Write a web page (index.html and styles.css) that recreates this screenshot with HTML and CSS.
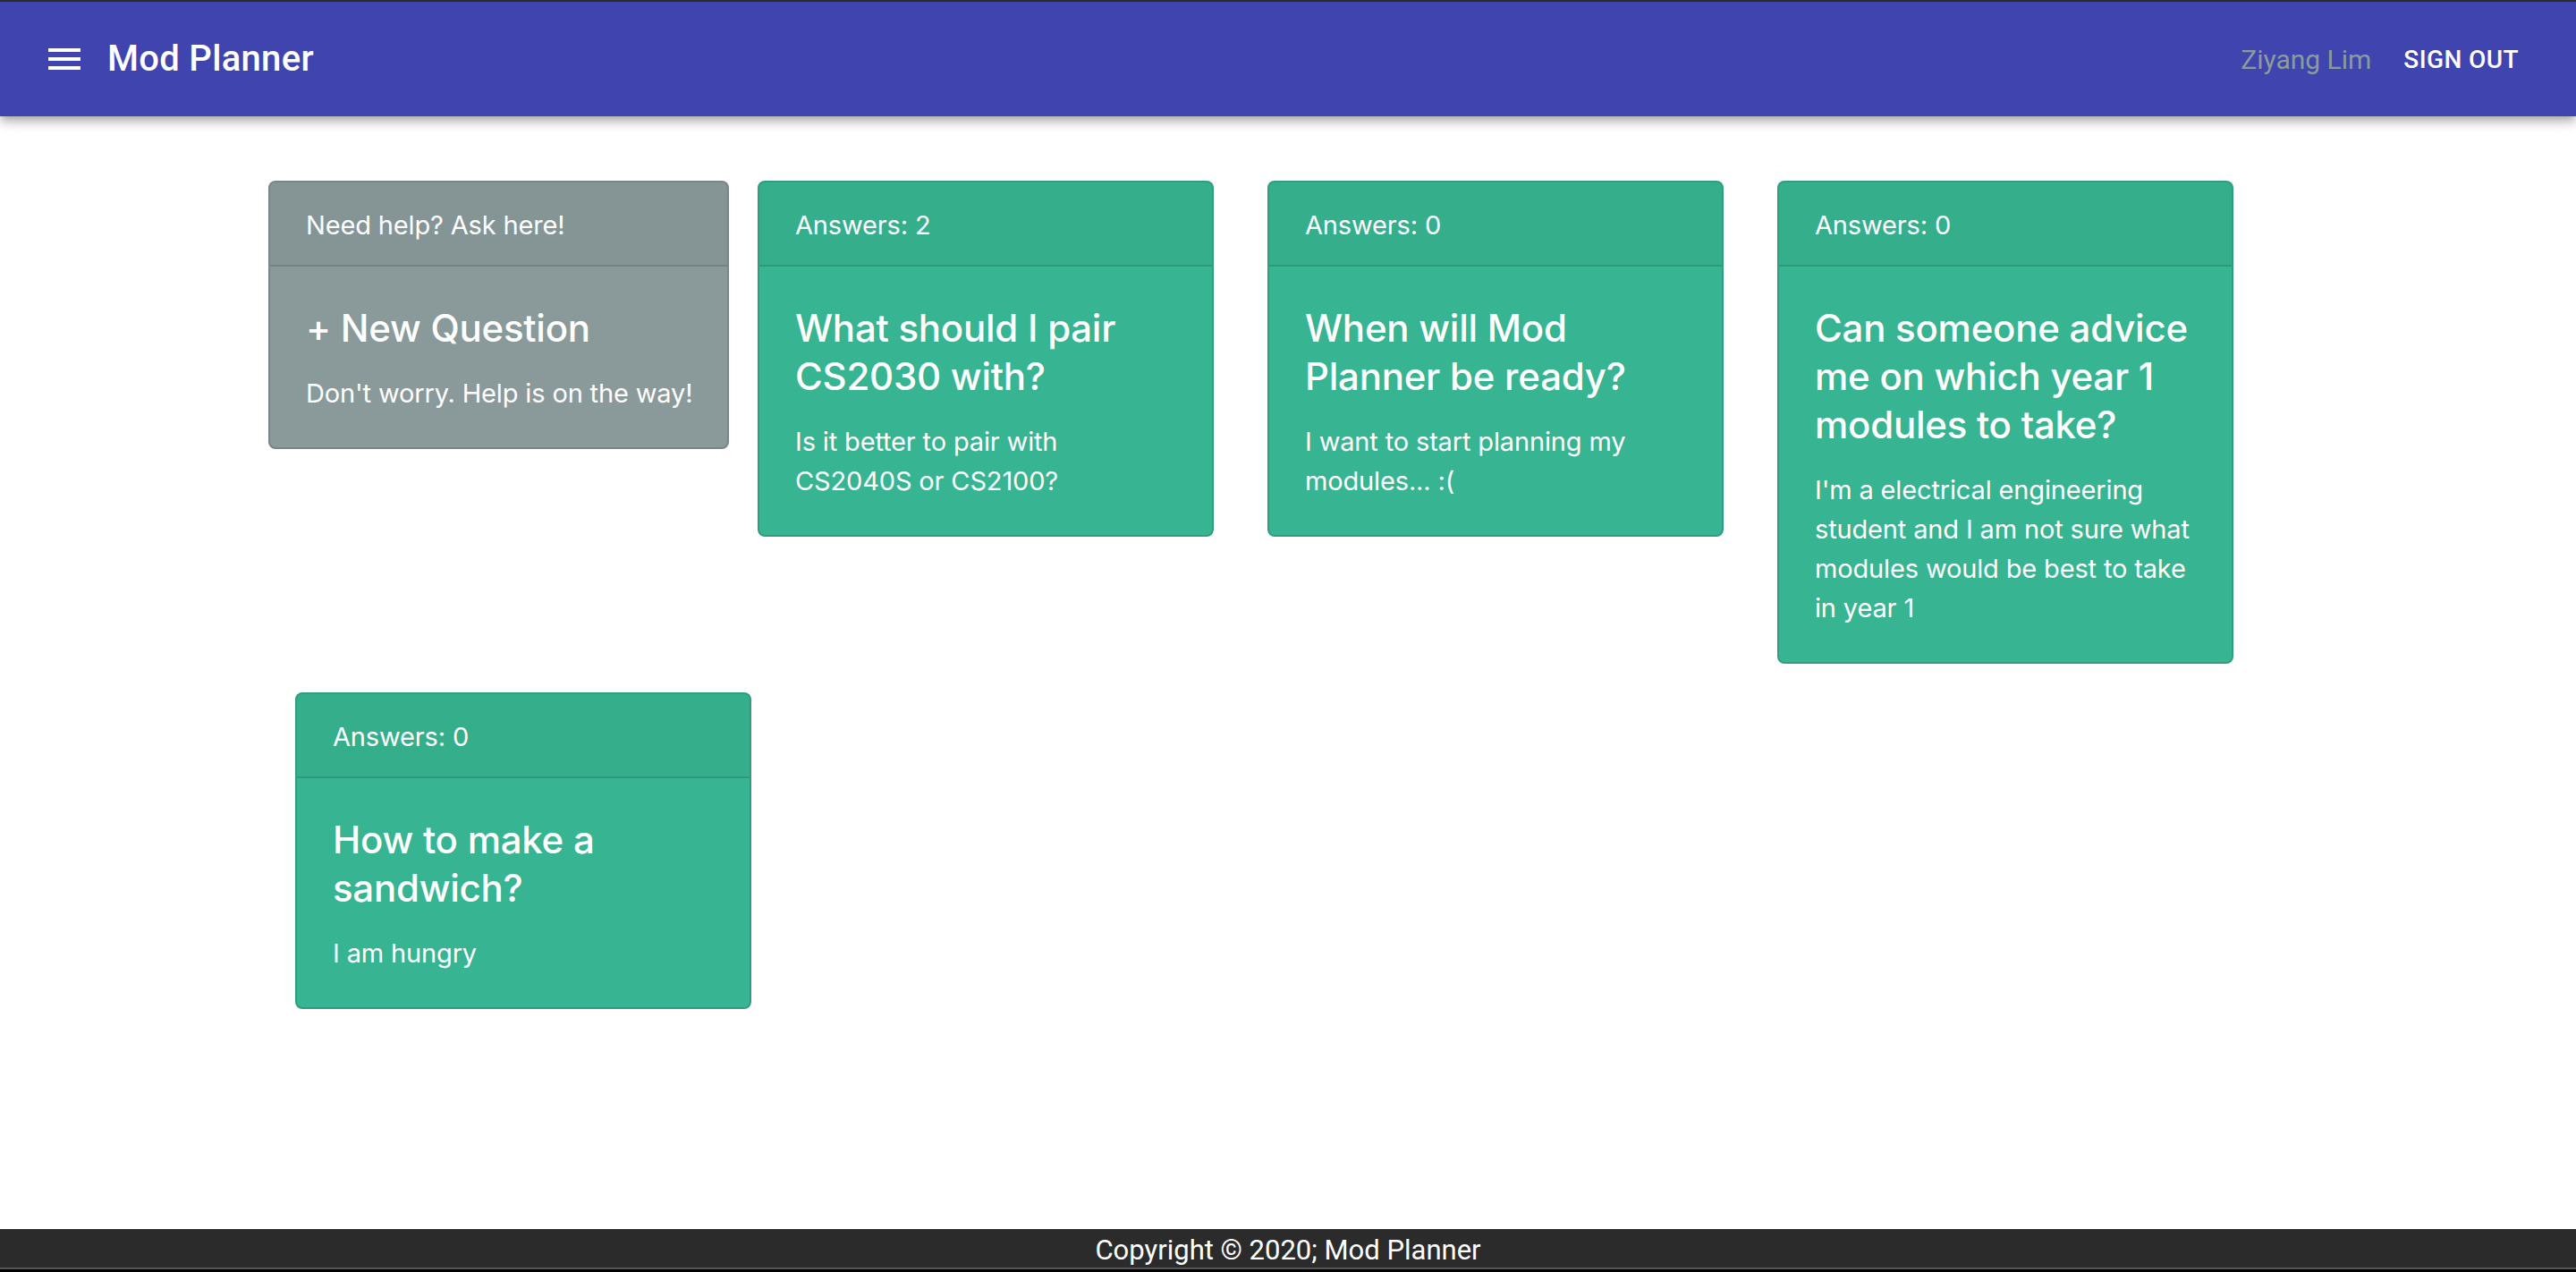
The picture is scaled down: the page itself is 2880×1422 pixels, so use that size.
FILE: index.html
```html
<!DOCTYPE html>
<html lang="en">
<head>
<meta charset="utf-8">
<title>Mod Planner</title>
<link rel="stylesheet" href="styles.css">
</head>
<body>
<header class="appbar">
  <button class="menu-btn" aria-label="menu">
    <svg viewBox="0 0 24 24" width="48" height="48"><path fill="#fff" d="M3 18h18v-2H3v2zm0-5h18v-2H3v2zm0-7v2h18V6H3z"/></svg>
  </button>
  <div class="brand">Mod Planner</div>
  <div class="user">Ziyang Lim</div>
  <button class="signout">Sign out</button>
</header>

<main class="board">
  <div class="card card-grey card-new">
    <div class="card-header">Need help? Ask here!</div>
    <div class="card-body">
      <h4 class="card-title">+ New Question</h4>
      <p class="card-text">Don't worry. Help is on the way!</p>
    </div>
  </div>

  <div class="col">
    <div class="card card-green">
      <div class="card-header">Answers: 2</div>
      <div class="card-body">
        <h4 class="card-title">What should I pair CS2030 with?</h4>
        <p class="card-text">Is it better to pair with CS2040S or CS2100?</p>
      </div>
    </div>
  </div>

  <div class="col">
    <div class="card card-green">
      <div class="card-header">Answers: 0</div>
      <div class="card-body">
        <h4 class="card-title">When will Mod Planner be ready?</h4>
        <p class="card-text">I want to start planning my modules... :(</p>
      </div>
    </div>
  </div>

  <div class="col">
    <div class="card card-green">
      <div class="card-header">Answers: 0</div>
      <div class="card-body">
        <h4 class="card-title">Can someone advice me on which year 1 modules to take?</h4>
        <p class="card-text">I'm a electrical engineering student and I am not sure what modules would be best to take in year 1</p>
      </div>
    </div>
  </div>

  <div class="col">
    <div class="card card-green">
      <div class="card-header">Answers: 0</div>
      <div class="card-body">
        <h4 class="card-title">How to make a sandwich?</h4>
        <p class="card-text">I am hungry</p>
      </div>
    </div>
  </div>
</main>

<footer class="footer">Copyright © 2020; Mod Planner</footer>
</body>
</html>
```
FILE: styles.css
```css
* { box-sizing: border-box; }
html, body { margin: 0; padding: 0; }
body {
  min-height: 100vh;
  display: flex;
  flex-direction: column;
  background: #fff;
  font-family: Inter, "Liberation Sans", sans-serif;
  color: #212529;
}
.appbar {
  height: 130px;
  border-top: 2px solid #2d2d2d;
  background: #3f44ae;
  display: flex;
  align-items: center;
  padding: 0 48px;
  box-shadow: 0 4px 8px -2px rgba(0,0,0,.2), 0 8px 10px 0 rgba(0,0,0,.14), 0 2px 20px 0 rgba(0,0,0,.12);
  position: relative;
  z-index: 2;
  font-family: Roboto, sans-serif;
}
.menu-btn {
  width: 96px; height: 96px;
  margin-left: -24px;
  padding: 0; border: 0; background: transparent;
  display: flex; align-items: center; justify-content: center;
}
.menu-btn svg { display: block; }
.brand {
  flex: 1;
  color: #fff;
  font-size: 40px;
  font-weight: 500;
  letter-spacing: 0.3px;
  line-height: 64px;
}
.user {
  color: #8b9b9c;
  font-size: 30px;
  margin-right: 20px;
}
.signout {
  font-family: Roboto, sans-serif;
  background: transparent; border: 0;
  color: #fff;
  font-size: 28px;
  font-weight: 500;
  letter-spacing: 0.4px;
  text-transform: uppercase;
  padding: 12px 16px;
  line-height: 1.75;
}
.board {
  width: 2280px;
  margin: 0 auto;
  padding-top: 72px;
  display: flex;
  flex-wrap: wrap;
  align-items: flex-start;
}
.col { width: 570px; padding: 0 30px; }
.card {
  border-radius: 8px;
  border: 2px solid rgba(0,0,0,.125);
  color: #fff;
  margin-bottom: 32px;
  overflow: hidden;
}
.card-new { width: 515px; margin-right: 2px; }
.card-new .card-text { white-space: nowrap; }
.card-grey { background: #8a9a9a; }
.card-green { background: #37b491; }
.card-header {
  padding: 26px 40px 22px;
  font-size: 29px;
  letter-spacing: -0.15px;
  line-height: 44px;
  background: rgba(0,0,0,.03);
  border-bottom: 2px solid rgba(0,0,0,.125);
}
.card-body { padding: 42px 40px 38px; }
.card-title {
  margin: 0 0 24px;
  font-size: 42px;
  font-weight: 500;
  letter-spacing: -0.25px;
  line-height: 54px;
}
.card-text {
  margin: 0;
  font-size: 29px;
  letter-spacing: -0.15px;
  line-height: 44px;
}
.footer {
  margin-top: auto;
  height: 48px;
  line-height: 48px;
  background: #2b2b2b;
  color: #fff;
  text-align: center;
  font-family: Roboto, sans-serif;
  font-size: 31px;
  box-shadow: inset 0 -3px 0 #000, inset 0 -5px 0 #555;
}
```
